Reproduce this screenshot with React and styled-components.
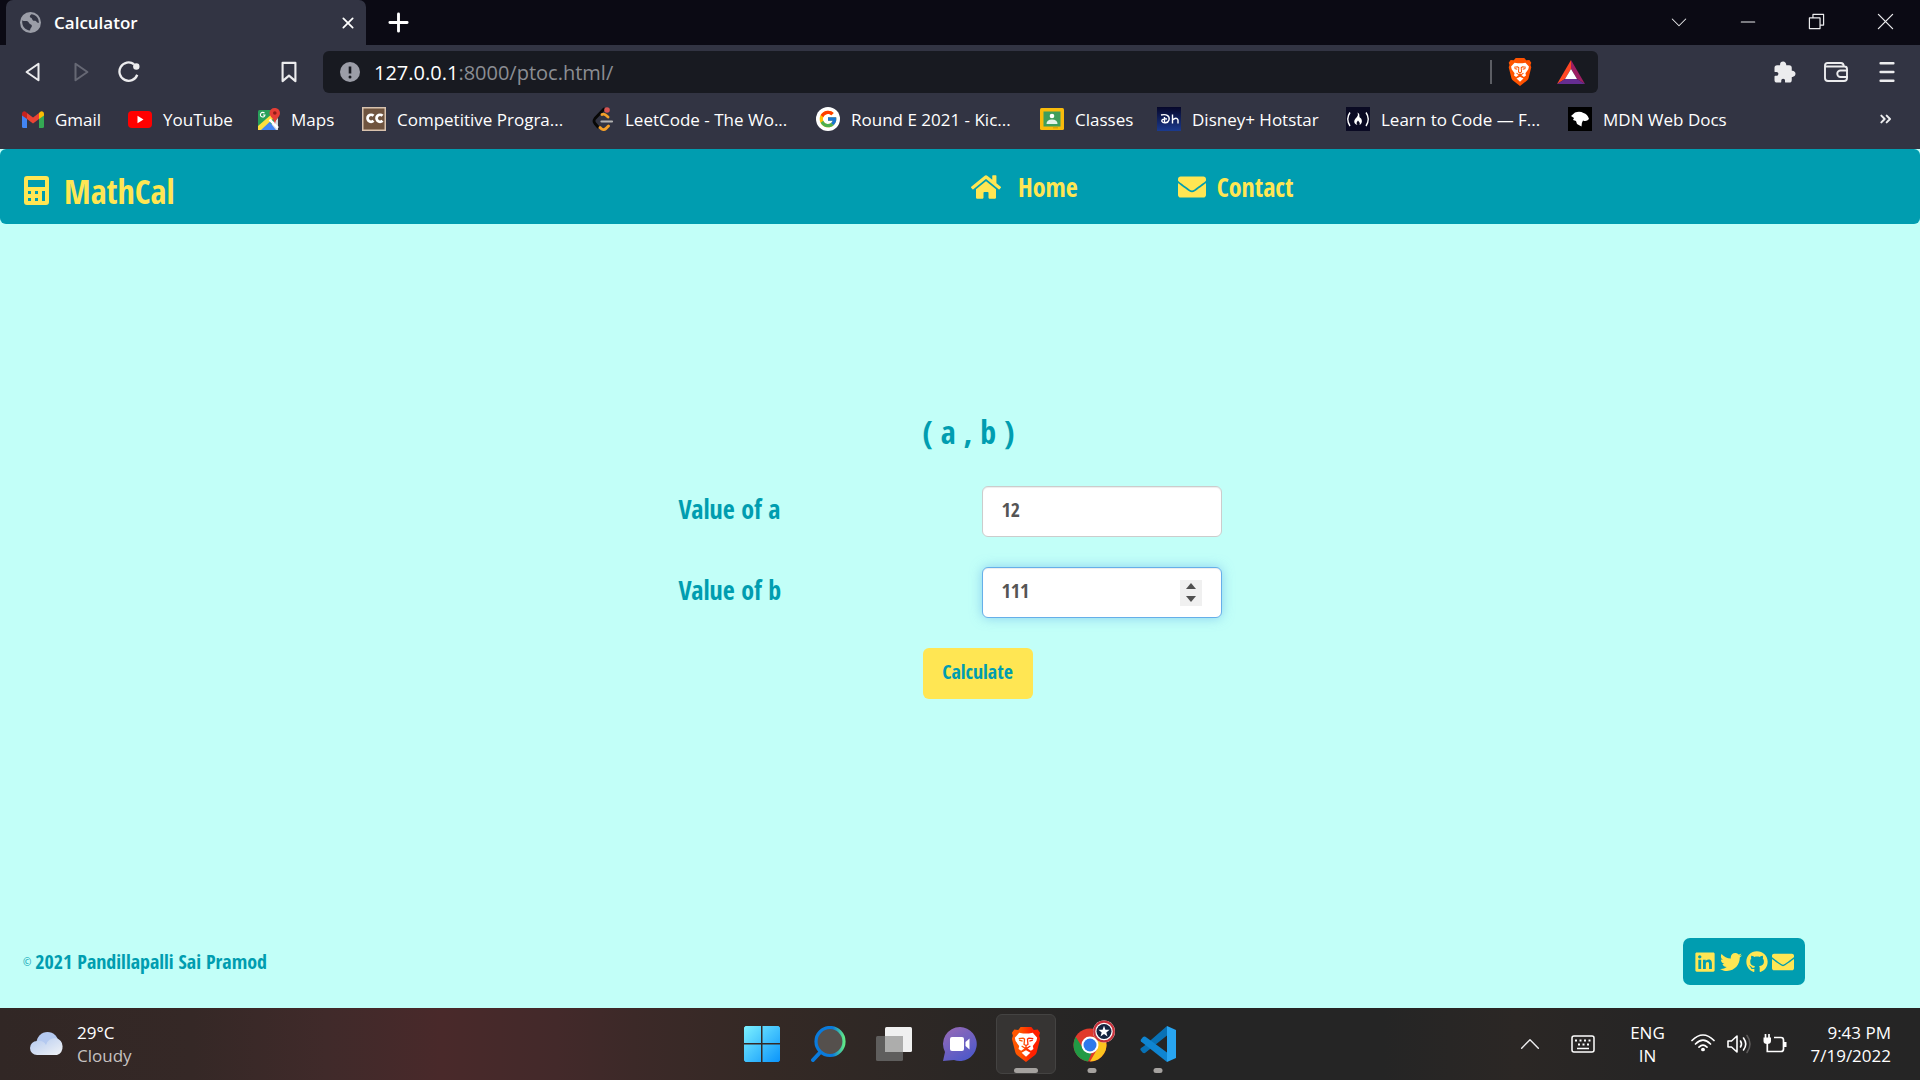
import React, { useState } from "react";
import styled, { createGlobalStyle } from "styled-components";
import { FaHome, FaEnvelope, FaLinkedin, FaTwitter, FaGithub } from "react-icons/fa";
import { IoExtensionPuzzle } from "react-icons/io5";
import { FcGoogle } from "react-icons/fc";

const teal = "#009db0";
const yellow = "#ffe653";
const aqua = "#c2fff8";
const uiFont = '"Open Sans", "Noto Sans", sans-serif';
const displayFont = '"Open Sans Condensed", "Roboto Condensed", sans-serif';

const GlobalStyle = createGlobalStyle`
  *, *::before, *::after { box-sizing: border-box; }
  body { margin: 0; background: ${aqua}; font-family: ${uiFont}; }
  button { border: 0; padding: 0; background: none; color: inherit; font: inherit; cursor: pointer; }
  a { color: inherit; text-decoration: none; }
  svg { display: block; flex: none; }
`;

const Screen = styled.div`
  min-height: 100vh;
  display: flex;
  flex-direction: column;
`;

const TabStrip = styled.div`
  display: flex;
  height: 45px;
  padding-left: 6px;
  background: #0b0a14;
  color: #fff;
`;

const Tab = styled.div`
  display: flex;
  align-items: center;
  gap: 13px;
  width: 360px;
  padding: 0 10px 0 14px;
  border-radius: 7px 7px 0 0;
  background: #323443;
  font-size: 17px;
  font-weight: 600;
`;

const TabTitle = styled.span`
  flex: 1;
`;

const IconButton = styled.button`
  display: grid;
  place-items: center;
  width: ${(p) => p.$width || 32}px;
  height: ${(p) => p.$height || 32}px;
  color: ${(p) => p.$color || "#ececee"};
`;

const WindowControls = styled.div`
  display: flex;
  margin-left: auto;
`;

const Toolbar = styled.div`
  display: grid;
  grid-template-columns: 323px 1fr 322px;
  align-items: center;
  height: 54px;
  background: #323443;
`;

const NavButtons = styled.div`
  display: flex;
  gap: 16px;
  padding: 0 18px 0 17px;

  & > :last-child { margin-left: auto; }
`;

const AddressBar = styled.div`
  display: flex;
  align-items: center;
  height: 42px;
  padding: 0 11px 0 17px;
  border-radius: 6px;
  background: #181a21;
  color: #8b8d93;
  font-size: 20px;
`;

const Url = styled.span`
  flex: 1;
  margin-left: 14px;
`;

const Host = styled.span`
  color: #fff;
`;

const Divider = styled.span`
  width: 2px;
  height: 24px;
  margin-right: 12px;
  background: #5c5e64;
`;

const BarActions = styled.div`
  display: flex;
  gap: 19px;
`;

const Extensions = styled.div`
  display: flex;
  justify-content: flex-end;
  gap: 19px;
  padding-right: 17px;
`;

const Bookmarks = styled.nav`
  display: flex;
  align-items: center;
  height: 50px;
  padding: 0 18px 10px 22px;
  background: #323443;
  color: #fff;
  font-size: 17px;
  white-space: nowrap;
`;

const Bookmark = styled.a`
  display: flex;
  align-items: center;
  gap: 11px;
  flex: none;
  width: ${(p) => p.$width}px;
`;

const More = styled.div`
  margin-left: auto;
`;

const SiteNav = styled.header`
  display: grid;
  grid-template-columns: 1fr 1fr;
  align-items: center;
  height: 75px;
  border-radius: 6px;
  background: ${teal};
  color: ${yellow};
  font-family: ${displayFont};
  font-weight: 700;
`;

const Brand = styled.a`
  display: flex;
  align-items: center;
  gap: 15px;
  padding: 8px 0 0 24px;
  font-size: 34px;
  line-height: 40px;
`;

const SiteLinks = styled.nav`
  display: flex;
  gap: 100px;
  padding-left: 11px;
`;

const SiteLink = styled.a`
  display: flex;
  align-items: center;
  gap: ${(p) => p.$gap}px;
  font-size: 26px;
  line-height: 32px;
`;

const Main = styled.main`
  flex: 1;
  display: flex;
  justify-content: center;
  padding: 188px 20px 0 0;
  color: ${teal};
  font-family: ${displayFont};
  font-weight: 700;
`;

const Form = styled.form`
  display: grid;
  grid-template-columns: 303px 240px;
  grid-auto-rows: min-content;
  row-gap: 30px;
`;

const Pair = styled.h1`
  grid-column: 1 / -1;
  margin: 0 0 4px 244px;
  font-size: 32px;
  font-weight: 700;
  line-height: 40px;
  white-space: pre;
`;

const Label = styled.label`
  font-size: 26px;
  line-height: 46px;
`;

const Field = styled.div`
  display: flex;
  align-items: center;
  height: 51px;
  padding: 0 19px;
  border: 1px solid ${(p) => (p.$active ? "#66afe9" : "#ccc")};
  border-radius: 6px;
  background: #fff;
  box-shadow: inset 0 1px 1px rgba(0, 0, 0, 0.075)
    ${(p) => (p.$active ? ", 0 0 12px rgba(102, 175, 233, 0.6)" : "")};
`;

const NumberInput = styled.input`
  flex: 1;
  min-width: 0;
  height: 46px;
  padding: 0 0 4px;
  border: 0;
  outline: 0;
  background: transparent;
  color: #555;
  font: 700 20px ${displayFont};
  appearance: textfield;

  &::-webkit-inner-spin-button { display: none; }
`;

const Stepper = styled.div`
  display: grid;
  width: 22px;
  height: 26px;
  background: #f0f0f0;
`;

const Submit = styled.button`
  grid-column: 1 / -1;
  width: 110px;
  height: 51px;
  margin-left: 244px;
  padding-bottom: 4px;
  border-radius: 6px;
  background: ${yellow};
  font-size: 20px;
`;

const SiteFooter = styled.footer`
  display: flex;
  align-items: center;
  justify-content: space-between;
  padding: 0 115px 23px 23px;
  color: ${teal};
  font-family: ${displayFont};
  font-size: 20px;
  font-weight: 700;
`;

const CopyMark = styled.small`
  margin-right: 4px;
  font: 400 10px ${uiFont};
  vertical-align: 3px;
`;

const Socials = styled.div`
  display: flex;
  align-items: center;
  gap: 4px;
  height: 47px;
  padding: 0 11px;
  border-radius: 7px;
  background: ${teal};
  color: ${yellow};
`;

const Taskbar = styled.div`
  display: grid;
  grid-template-columns: 1fr auto 1fr;
  align-items: center;
  height: 72px;
  background: linear-gradient(90deg, #312725 0%, #352826 10%, #402a2a 17%, #49292a 23%, #43292a 29%, #3c2928 33%, #342925 40%, #2b2725 50%, #252525 58%, #252525 72%, #2b2725 79%, #262525 86%, #252525 100%);
  color: #fff;
  font-size: 17px;
  line-height: 23px;
`;

const Weather = styled.div`
  display: flex;
  align-items: center;
  gap: 11px;
  padding-left: 30px;
`;

const Muted = styled.div`
  color: #c6c2c1;
`;

const Apps = styled.div`
  display: flex;
  gap: 6px;
`;

const AppTile = styled.button`
  position: relative;
  display: grid;
  place-items: center;
  width: 60px;
  height: 60px;
  border: 1px solid ${(p) => (p.$active ? "#444342" : "transparent")};
  border-radius: 6px;
  background: ${(p) => (p.$active ? "#363433" : "none")};

  &::after {
    content: "";
    position: absolute;
    bottom: 0;
    left: 50%;
    width: ${(p) => p.$mark || 0}px;
    height: 5px;
    border-radius: 3px;
    background: #a5a29f;
    transform: translateX(-50%);
  }
`;

const Tray = styled.div`
  display: flex;
  align-items: center;
  justify-content: flex-end;
  gap: 23px;
  padding-right: 29px;
`;

const Language = styled.div`
  width: 42px;
  text-align: center;
`;

const Status = styled.div`
  display: flex;
  gap: 12px;
`;

const Clock = styled.time`
  text-align: right;
`;

const Line = ({ d, size = 20, w = 2, fill = "none", ...rest }) => (
  <svg width={size} height={size} viewBox="0 0 24 24" fill={fill} stroke="currentColor" strokeWidth={w} strokeLinecap="round" strokeLinejoin="round" aria-hidden="true" {...rest}>
    <path d={d} />
  </svg>
);

const Globe = () => (
  <svg width="21" height="21" viewBox="0 0 24 24">
    <circle cx="12" cy="12" r="12" fill="#9b9da7" />
    <path d="M2.500 9.500c2.500 2 6-.5 7.500 2.500s3 1.500 3.500 3.500-1.500 2-2 5.500C6 21 2 16.500 2.500 9.500zM13 2.500c-2 1.500-2.500 3.500-.5 4s1 3.500 4 3.500 2 2.500 5 2.500c.5-5.500-4-10-8.500-10z" fill="#323443" />
  </svg>
);

const InfoMark = () => (
  <svg width="20" height="20" viewBox="0 0 20 20">
    <circle cx="10" cy="10" r="10" fill="#9b9da7" />
    <path d="M10 4.500v7" stroke="#181a21" strokeWidth="2.600" />
    <circle cx="10" cy="15" r="1.500" fill="#181a21" />
  </svg>
);

const BraveMark = ({ width, id, right }) => (
  <svg width={width} height={Math.round(width * 1.17)} viewBox="0 0 30 36">
    <defs>
      <linearGradient id={id}>
        <stop offset=".3" stopColor="#ff5500" />
        <stop offset=".7" stopColor={right} />
      </linearGradient>
    </defs>
    <path d="M9.500 0h11L23 3l4-.5L29.500 6l-1 3 1 3-3.500 14q-.5 2-2 3L15 36l-9-7q-1.500-1-2-3L.5 12l1-3-1-3L3 2.500 7 3z" fill={`url(#${id})`} />
    <path d="M8 6l4 .8h6L22 6l4.500 5-.8 3.500-3.700 5 .7 3-2.700 2-3-2.200L15 21l-2 1.300-3 2.200-2.700-2 .7-3-3.700-5-.8-3.500z" fill="#fff" />
    <path d="M15 24l4.500 2.500L15 30.500l-4.500-4z" fill="#fff" />
    <path d="M7.500 12l4.500-.6 1.500 1.100-.5 5.500 2 1 2-1-.5-5.500 1.500-1.100 4.500.6M8 13.500l3.500 1M22 13.500l-3.500 1M15 19v3M10.500 19.500l4.500 3 4.500-3" fill="none" stroke={`url(#${id})`} strokeWidth="1.300" />
  </svg>
);

const Triangle = () => (
  <svg width="28" height="24" viewBox="0 0 28 24">
    <path d="M14 0v9L8 19l-8 5z" fill="#ff4724" />
    <path d="M14 0v9l6 10 8 5z" fill="#9e1f63" />
    <path d="M0 24l8-5h12l8 5z" fill="#662d91" />
    <path d="M14 9l6 10H8z" fill="#fff" />
  </svg>
);

const GmailMark = () => (
  <svg width="22" height="17" viewBox="0 0 22 17">
    <path d="M0 3l5 4v10H1.500Q0 17 0 15.500z" fill="#4285f4" />
    <path d="M22 3l-5 4v10h3.500q1.500 0 1.500-1.500z" fill="#34a853" />
    <path d="M5 2l6 4.500L17 2v6l-6 4.500L5 8z" fill="#ea4335" />
    <path d="M0 3C0 .5 2.500-.5 4 1l1 1v6L0 4.500z" fill="#c5221f" />
    <path d="M22 3c0-2.500-2.500-3.500-4-2l-1 1v6l5-3.500z" fill="#fbbc04" />
  </svg>
);

const YouTubeMark = () => (
  <svg width="24" height="17" viewBox="0 0 24 17">
    <rect width="24" height="17" rx="4" fill="#f00" />
    <path d="M9.500 4.800v7.400l6-3.700z" fill="#fff" />
  </svg>
);

const MapsMark = () => (
  <svg width="22" height="22" viewBox="0 0 22 22">
    <rect y="2" width="20" height="20" rx="1.500" fill="#28a05a" />
    <path d="M20 10v12H8z" fill="#d5dae2" />
    <path d="M10 12l8 10H2z" fill="#4285f4" />
    <path d="M0 18v4h3L18 8l-3-3z" fill="#ffdf3d" />
    <path d="M11.500 11.500L20 20" stroke="#fff" strokeWidth="2.500" />
    <path d="M6.500 5.200A2.300 2.300 0 107 7H5" fill="none" stroke="#fff" strokeWidth="1.100" />
    <path d="M16.500 0A5 5 0 0122 5c0 4-4 5-5 11-1-6-5.500-7-5.500-11a5 5 0 015-5z" fill="#e53e35" />
    <circle cx="16.800" cy="5" r="1.800" fill="#8f1d17" />
  </svg>
);

const ChefMark = () => (
  <svg width="24" height="24" viewBox="0 0 24 24">
    <rect x=".75" y=".75" width="22.500" height="22.500" fill="#6f543f" stroke="#d8c2ae" strokeWidth="1.500" />
    <path d="M11.500 8.800a3.500 3.500 0 100 5M20.500 8.800a3.500 3.500 0 100 5" fill="none" stroke="#fff" strokeWidth="2.800" />
  </svg>
);

const LeetMark = () => (
  <svg width="22" height="24" viewBox="0 0 22 24" fill="none" strokeWidth="2.800" strokeLinecap="round">
    <path d="M12 2L3 11.500q-2 2.500 0 5L6 20" stroke="#070706" />
    <path d="M10 7.500q2-1 4 .8l2 1.700M8 20.500q3.500 4 6.500.5l2-2" stroke="#f5a028" />
    <path d="M9.500 14.500H20" stroke="#b3b3b3" strokeWidth="2.200" />
    <circle cx="15" cy="3" r="2.800" fill="#d75452" />
  </svg>
);

const GoogleMark = () => (
  <svg width="24" height="24" viewBox="0 0 24 24">
    <circle cx="12" cy="12" r="12" fill="#fff" />
    <FcGoogle x={2} y={2} size={20} />
  </svg>
);

const ClassMark = () => (
  <svg width="24" height="22" viewBox="0 0 24 22">
    <rect width="24" height="22" rx="1.500" fill="#f9bb0c" />
    <rect x="3.500" y="3.500" width="17" height="15" fill="#3f9e5c" />
    <circle cx="12" cy="8" r="2.300" fill="#fff" />
    <path d="M6.500 16q0-4.500 5.500-4.500t5.500 4.500z" fill="#e4f3ea" />
    <path d="M13 19h5v1.500h-5z" fill="#e0a300" />
  </svg>
);

const HotstarMark = () => (
  <svg width="24" height="24" viewBox="0 0 24 24">
    <defs>
      <linearGradient id="hotstar" x1="0" y1="0" x2="0" y2="1">
        <stop offset="0" stopColor="#06072a" />
        <stop offset="1" stopColor="#1b3a8e" />
      </linearGradient>
    </defs>
    <rect width="24" height="24" fill="url(#hotstar)" />
    <path d="M4 8c6-1.500 9 1.500 8 5s-6 3.500-7 1.500 2-3 5-2.500M7.500 10v6M15.500 7.500v9M15.500 13q4-3.500 5.500 0v3.500" fill="none" stroke="#fff" strokeWidth="1.400" />
  </svg>
);

const CampMark = () => (
  <svg width="24" height="24" viewBox="0 0 24 24">
    <rect width="24" height="24" fill="#0a0a23" />
    <path d="M4 5.500Q-.5 12 4 19M20 5.500q4.500 6.500 0 13.500" fill="none" stroke="#fff" strokeWidth="1.400" />
    <path d="M11.500 5.500c3.500 2 .5 4 3 5.500 1.500 1 2.500 5-1 7 1-2.500-.5-3-1.500-4.500-1.500 1.500-2 3-.5 4.500-4-1-4-4.500-1.500-7s2-3.500 1.500-5.500z" fill="#fff" />
  </svg>
);

const MdnMark = () => (
  <svg width="24" height="24" viewBox="0 0 24 24">
    <path d="M0 0h24v24H0z" />
    <path d="M3 9l4-3.500q5-1.500 8.500.5 4 1 5.500 6-2.500 3-6 1.500-1.500 2-1.500 6L9 17l-1-3-3-1 1-2z" fill="#fff" />
  </svg>
);

const CalculatorMark = () => (
  <svg width="25" height="29" viewBox="0 0 25 29">
    <path fillRule="evenodd" fill="currentColor" d="M3 0h19q3 0 3 3v23q0 3-3 3H3q-3 0-3-3V3q0-3 3-3zm1 4v7h17V4zm0 11v3h3v-3zm7 0v3h3v-3zm7 0v10h3V15zM4 22v3h3v-3zm7 0v3h3v-3z" />
  </svg>
);

const CloudMark = () => (
  <svg width="36" height="24" viewBox="0 0 36 24">
    <defs>
      <linearGradient id="cloud" x1="0" y1="0" x2="1" y2="1">
        <stop offset="0" stopColor="#b3c9ef" />
        <stop offset="1" stopColor="#f1f3f6" />
      </linearGradient>
    </defs>
    <circle cx="17.500" cy="11" r="11" fill="#b4c9f0" />
    <path d="M7 9q6-1 9 4 2-7 10-7a9 9 0 011 17H7A7 7 0 017 9z" fill="url(#cloud)" />
  </svg>
);

const WindowsMark = () => (
  <svg width="36" height="36" viewBox="0 0 36 36">
    <defs>
      <linearGradient id="win" x1="0" y1="0" x2="1" y2="1">
        <stop offset="0" stopColor="#7cf1ff" />
        <stop offset="1" stopColor="#0a94fb" />
      </linearGradient>
    </defs>
    <path d="M1.500 0H17v17H0V1.500zM18.500 0h16L36 1.500V17H18.500zM0 18.500h17V36H1.500L0 34.500zM18.500 18.500H36v16L34.500 36h-16z" fill="url(#win)" />
  </svg>
);

const SearchMark = () => (
  <svg width="36" height="36" viewBox="0 0 36 36">
    <defs>
      <linearGradient id="lens" x1="0" x2="1">
        <stop offset=".6" stopColor="#0a7bdc" />
        <stop offset="1" stopColor="#5fe887" />
      </linearGradient>
    </defs>
    <path d="M10.500 26L3 34" stroke="#0a7bdc" strokeWidth="4" strokeLinecap="round" />
    <circle cx="20" cy="15.500" r="14" fill="#55504d" stroke="url(#lens)" strokeWidth="3.200" />
  </svg>
);

const TaskViewMark = () => (
  <svg width="36" height="34" viewBox="0 0 36 34">
    <rect y="9" width="27" height="25" rx="1.500" fill="#5f5e5d" />
    <rect x="9" width="27" height="25" rx="1.500" fill="#f0f0f0" />
    <path d="M9 9h18v16H9z" fill="#adadac" />
  </svg>
);

const ChatMark = () => (
  <svg width="36" height="36" viewBox="0 0 36 36">
    <defs>
      <linearGradient id="chat" x1="0" y1="0" x2=".6" y2="1">
        <stop offset="0" stopColor="#9a6bb5" />
        <stop offset="1" stopColor="#5059c9" />
      </linearGradient>
    </defs>
    <path d="M18 1a17 17 0 11-6 33L1 35l2-9A17 17 0 0118 1z" fill="url(#chat)" />
    <rect x="8" y="11" width="14" height="14" rx="2" fill="#fff" />
    <path d="M23.500 16l4-3.500v11l-4-3.500z" fill="#fff" />
  </svg>
);

const ChromeMark = () => (
  <svg width="46" height="48" viewBox="-4 0 46 48">
    <circle cx="17" cy="25" r="16.500" fill="#e0392b" />
    <path d="M2.700 16.800L11 30l8 2-4 9.400A16.500 16.500 0 012.700 16.800z" fill="#219a45" />
    <path d="M17 17.500h14.700A16.500 16.500 0 0117 41.500l7-12z" fill="#fcc31e" />
    <circle cx="17" cy="25" r="8.500" fill="#fff" />
    <circle cx="17" cy="25" r="6.500" fill="#2f79ea" />
    <circle cx="31" cy="11.500" r="11" fill="#fff" />
    <circle cx="31" cy="11.500" r="9.800" fill="none" stroke="#c8323c" strokeWidth="2.200" />
    <circle cx="31" cy="11.500" r="7.500" fill="#14233f" />
    <path d="M31 5.700l1.400 4 4.200.1-3.300 2.600 1.200 4-3.500-2.300-3.500 2.300 1.200-4-3.300-2.600 4.200-.1z" fill="#fff" />
  </svg>
);

const CodeMark = () => (
  <svg width="36" height="36" viewBox="0 0 36 36">
    <path d="M1 22l3-2L27 0v9.500L5 27q-1.500.5-2.500-.5L.5 24q-.5-1 .5-2z" fill="#0871b5" />
    <path d="M1 13.500l2-2.500q1-1 2.500-.3L27 26.500V36L1 15.500q-.7-1 0-2z" fill="#0f85d1" />
    <path d="M27 0l9 4v28l-9 4z" fill="#28a5f1" />
  </svg>
);

const KeyboardMark = () => (
  <svg width="24" height="18" viewBox="0 0 24 18" fill="none" stroke="#fff" strokeWidth="1.500">
    <rect x="1" y="1" width="22" height="16" rx="2" />
    <path d="M4 5.500h16" strokeWidth="2" strokeDasharray="2 2.500" />
    <path d="M7 9.500h11" strokeWidth="2" strokeDasharray="2 2.500" />
    <path d="M6 13.500h12" />
  </svg>
);

const WifiMark = () => (
  <svg width="24" height="18" viewBox="0 0 24 18" fill="none" stroke="#fff" strokeWidth="1.700" strokeLinecap="round">
    <path d="M1 6.500q11-11 22 0M4.500 10q7.500-7.500 15 0M8 13.200q4-4 8 0" />
    <circle cx="12" cy="15.500" r="1.500" fill="#fff" stroke="none" />
    <circle cx="12" cy="15.500" r="1" />
  </svg>
);

const VolumeMark = () => (
  <svg width="24" height="20" viewBox="0 0 24 20" fill="none" stroke="#fff" strokeWidth="1.600" strokeLinejoin="round" strokeLinecap="round">
    <path d="M1 7h3.500L10 2v16l-5.500-5H1z" />
    <path d="M13.500 7q2 3 0 6M16.500 4q4.500 6 0 12" />
    <path d="M20 1.500q6 8.500 0 17" stroke="#5c5a59" />
  </svg>
);

const BatteryMark = () => (
  <svg width="24" height="20" viewBox="0 0 24 20" fill="none" stroke="#fff" strokeWidth="1.700">
    <path d="M11 3.500h7q2.500 0 2.500 2.500v9q0 2.500-2.500 2.500H4.300V9" />
    <path d="M.5 3.500h7.500V7q0 3-3.800 3T.5 7z" fill="#fff" stroke="none" />
    <path d="M2.500 0v4M6 0v4" />
    <path d="M21 8h2.500v5H21z" fill="#fff" stroke="none" />
  </svg>
);

const bookmarks = [
  { name: "Gmail", width: 106, icon: GmailMark },
  { name: "YouTube", width: 130, icon: YouTubeMark },
  { name: "Maps", width: 104, icon: MapsMark },
  { name: "Competitive Progra...", width: 230, icon: ChefMark },
  { name: "LeetCode - The Wo...", width: 224, icon: LeetMark },
  { name: "Round E 2021 - Kic...", width: 224, icon: GoogleMark },
  { name: "Classes", width: 117, icon: ClassMark },
  { name: "Disney+ Hotstar", width: 189, icon: HotstarMark },
  { name: "Learn to Code — F...", width: 222, icon: CampMark },
  { name: "MDN Web Docs", width: 180, icon: MdnMark },
];

const socials = [
  { name: "LinkedIn", icon: FaLinkedin },
  { name: "Twitter", icon: FaTwitter },
  { name: "GitHub", icon: FaGithub },
  { name: "Email", icon: FaEnvelope },
];

function Browser() {
  return (
    <>
      <TabStrip>
        <Tab>
          <Globe />
          <TabTitle>Calculator</TabTitle>
          <IconButton aria-label="Close tab" $width={16} $color="#fff">
            <Line d="M5 5l14 14M19 5L5 19" size={16} w={2.600} />
          </IconButton>
        </Tab>
        <IconButton aria-label="New tab" $width={64} $height={45} $color="#fff">
          <Line d="M12 3v18M3 12h18" size={23} w={3} />
        </IconButton>
        <WindowControls>
          <IconButton aria-label="Search tabs" $width={69} $height={43}><Line d="M3 8l9 9 9-9" size={18} w={1.400} /></IconButton>
          <IconButton aria-label="Minimize" $width={69} $height={43}><Line d="M2 12h20" size={16} w={1.800} /></IconButton>
          <IconButton aria-label="Restore" $width={69} $height={43}><Line d="M2 7h15v15H2zM7 7V2h15v15h-5" size={17} w={1.700} /></IconButton>
          <IconButton aria-label="Close" $width={69} $height={43}><Line d="M2 2l20 20M22 2L2 22" size={17} w={1.800} /></IconButton>
        </WindowControls>
      </TabStrip>
      <Toolbar>
        <NavButtons>
          <IconButton aria-label="Back"><Line d="M18 3v18L5 12z" size={22} w={2.200} /></IconButton>
          <IconButton aria-label="Forward" $color="#666874"><Line d="M6 3v18l13-9z" size={22} w={2.200} /></IconButton>
          <IconButton aria-label="Reload">
            <svg width="22" height="22" viewBox="0 0 24 24" fill="none" stroke="currentColor" strokeWidth="2.500">
              <path d="M17.500 3.500A10 10 0 1021 15" />
              <circle cx="20" cy="6" r="3.500" fill="currentColor" stroke="none" />
            </svg>
          </IconButton>
          <IconButton aria-label="Bookmark this page"><Line d="M5 2h14v20l-7-6-7 6z" size={22} w={2.300} /></IconButton>
        </NavButtons>
        <AddressBar>
          <InfoMark />
          <Url><Host>127.0.0.1</Host>:8000/ptoc.html/</Url>
          <Divider />
          <BarActions>
            <IconButton aria-label="Brave Shields"><BraveMark width={24} id="shield" right="#ff5000" /></IconButton>
            <IconButton aria-label="Rewards"><Triangle /></IconButton>
          </BarActions>
        </AddressBar>
        <Extensions>
          <IconButton aria-label="Extensions"><IoExtensionPuzzle size={24} /></IconButton>
          <IconButton aria-label="Wallet">
            <svg width="24" height="20" viewBox="0 0 24 20" fill="none" stroke="currentColor" strokeWidth="1.900" strokeLinejoin="round">
              <path d="M23 9V7q0-2.500-2.500-2.500H1V16q0 3 3 3h16q3 0 3-3v-2M1 5V3.500Q1 1 3.500 1H17q2.500 0 3 3.500" />
              <path d="M23 8.500h-6.500a3 3 0 000 6.500H23z" />
            </svg>
          </IconButton>
          <IconButton aria-label="Menu"><Line d="M5 2.500h14M5 12h14M5 21.500h14" size={22} w={2.600} /></IconButton>
        </Extensions>
      </Toolbar>
      <Bookmarks aria-label="Bookmarks">
        {bookmarks.map(({ name, width, icon: Icon }) => (
          <Bookmark key={name} href="#" $width={width}>
            <Icon />
            {name}
          </Bookmark>
        ))}
        <More>
          <IconButton aria-label="More bookmarks"><Line d="M5 7l5 5-5 5M13 7l5 5-5 5" size={16} w={3} /></IconButton>
        </More>
      </Bookmarks>
    </>
  );
}

function Calculator() {
  const [a, setA] = useState(12);
  const [b, setB] = useState(111);
  return (
    <Main>
      <Form onSubmit={(e) => e.preventDefault()}>
        <Pair>( a , b )</Pair>
        <Label htmlFor="a">Value of a</Label>
        <Field>
          <NumberInput id="a" type="number" value={a} onChange={(e) => setA(e.target.value)} />
        </Field>
        <Label htmlFor="b">Value of b</Label>
        <Field $active>
          <NumberInput id="b" type="number" value={b} onChange={(e) => setB(e.target.value)} />
          <Stepper>
            <IconButton type="button" aria-label="Increase" $width={22} $height={13} $color="#505050" onClick={() => setB(Number(b) + 1)}>
              <svg width="10" height="6" viewBox="0 0 10 6"><path d="M0 6l5-6 5 6z" fill="currentColor" /></svg>
            </IconButton>
            <IconButton type="button" aria-label="Decrease" $width={22} $height={13} $color="#505050" onClick={() => setB(Number(b) - 1)}>
              <svg width="10" height="6" viewBox="0 0 10 6"><path d="M0 0l5 6 5-6z" fill="currentColor" /></svg>
            </IconButton>
          </Stepper>
        </Field>
        <Submit type="submit">Calculate</Submit>
      </Form>
    </Main>
  );
}

export default function App() {
  return (
    <Screen>
      <GlobalStyle />
      <Browser />
      <SiteNav>
        <Brand href="#"><CalculatorMark />MathCal</Brand>
        <SiteLinks>
          <SiteLink href="#" $gap={17}><FaHome size={30} />Home</SiteLink>
          <SiteLink href="#" $gap={11}><FaEnvelope size={28} />Contact</SiteLink>
        </SiteLinks>
      </SiteNav>
      <Calculator />
      <SiteFooter>
        <span><CopyMark>©</CopyMark>2021 Pandillapalli Sai Pramod</span>
        <Socials>
          {socials.map(({ name, icon: Icon }) => (
            <a key={name} href="#" aria-label={name}><Icon size={22} /></a>
          ))}
        </Socials>
      </SiteFooter>
      <Taskbar>
        <Weather>
          <CloudMark />
          <div>29°C<Muted>Cloudy</Muted></div>
        </Weather>
        <Apps>
          <AppTile aria-label="Start"><WindowsMark /></AppTile>
          <AppTile aria-label="Search"><SearchMark /></AppTile>
          <AppTile aria-label="Task view"><TaskViewMark /></AppTile>
          <AppTile aria-label="Chat"><ChatMark /></AppTile>
          <AppTile aria-label="Brave" $active $mark={24}><BraveMark width={30} id="lion" right="#ff2000" /></AppTile>
          <AppTile aria-label="Chrome" $mark={9}><ChromeMark /></AppTile>
          <AppTile aria-label="Visual Studio Code" $mark={9}><CodeMark /></AppTile>
        </Apps>
        <Tray>
          <IconButton aria-label="Show hidden icons" $width={20}><Line d="M2 17l10-10 10 10" size={20} w={1.700} /></IconButton>
          <IconButton aria-label="Touch keyboard" $width={40}><KeyboardMark /></IconButton>
          <Language>ENG<br />IN</Language>
          <Status><WifiMark /><VolumeMark /><BatteryMark /></Status>
          <Clock>9:43 PM<br />7/19/2022</Clock>
        </Tray>
      </Taskbar>
    </Screen>
  );
}
